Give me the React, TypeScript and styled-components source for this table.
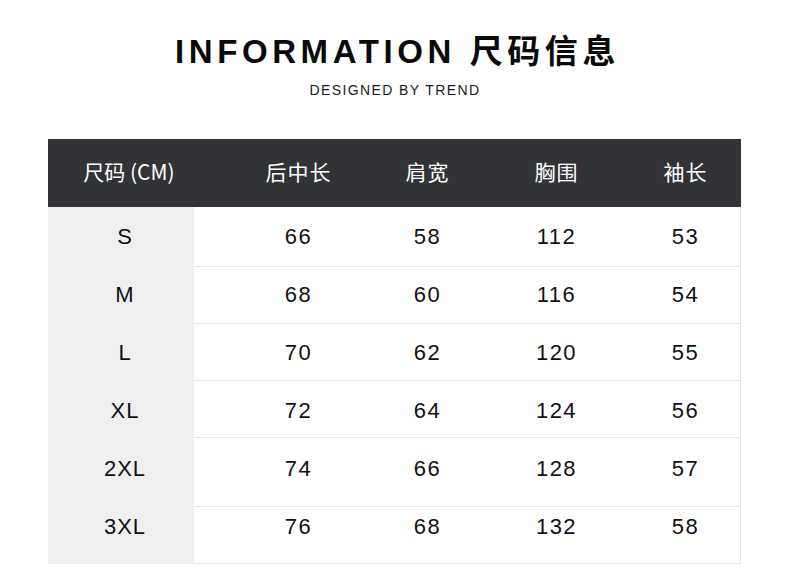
import React from "react";
import styled, { createGlobalStyle } from "styled-components";

type SizeRow = {
  size: string;
  values: number[];
  height: number;
  top: number;
};

const columns = ["后中长", "肩宽", "胸围", "袖长"];

const rows: SizeRow[] = [
  { size: "S", values: [66, 58, 112, 53], height: 60, top: 19 },
  { size: "M", values: [68, 60, 116, 54], height: 57, top: 17 },
  { size: "L", values: [70, 62, 120, 55], height: 57, top: 18 },
  { size: "XL", values: [72, 64, 124, 56], height: 57, top: 19 },
  { size: "2XL", values: [74, 66, 128, 57], height: 69, top: 20 },
  { size: "3XL", values: [76, 68, 132, 58], height: 57, top: 9 },
];

const GlobalStyle = createGlobalStyle`
  html, body {
    margin: 0;
    padding: 0;
    background: #fff;
  }
  body {
    font-family: "Liberation Sans", Arial, "Noto Sans CJK SC", sans-serif;
    color: #111;
  }
`;

export default function App() {
  return (
    <>
      <GlobalStyle />
      <Page>
        <Title>INFORMATION 尺码信息</Title>
        <Subtitle>DESIGNED BY TREND</Subtitle>
        <Table>
          <HeaderRow>
            <HeaderSizeCell>尺码 (CM)</HeaderSizeCell>
            <Values>
              {columns.map((c) => (
                <HeaderCell key={c}>{c}</HeaderCell>
              ))}
            </Values>
          </HeaderRow>
          {rows.map((r) => (
            <Row key={r.size} $h={r.height}>
              <SizeCell $top={r.top}>{r.size}</SizeCell>
              <ValueLine>
                {r.values.map((v, i) => (
                  <ValueCell key={i} $top={r.top}>
                    {v}
                  </ValueCell>
                ))}
              </ValueLine>
            </Row>
          ))}
        </Table>
      </Page>
    </>
  );
}

const Page = styled.div`
  width: 790px;
  height: 568px;
  overflow: hidden;
  display: flex;
  flex-direction: column;
  align-items: center;
  padding-top: 35px;
  box-sizing: border-box;
`;

const Title = styled.h1`
  margin: 0 0 0 5px;
  font-family: "Liberation Sans", Arial, "Noto Sans CJK SC", sans-serif;
  font-size: 33px;
  line-height: 33px;
  font-weight: 700;
  letter-spacing: 4.6px;
  color: #0a0a0a;
`;

const Subtitle = styled.div`
  margin-top: 15px;
  font-size: 14px;
  line-height: 14px;
  letter-spacing: 1.4px;
  color: #1a1a1a;
`;

const Table = styled.div`
  align-self: flex-start;
  margin: 42px 0 0 48px;
  width: 693px;
  display: flex;
  flex-direction: column;
`;

const HeaderRow = styled.div`
  display: grid;
  grid-template-columns: 146px minmax(0, 1fr);
  height: 68px;
  padding-bottom: 4px;
  box-sizing: border-box;
  background: #323337;
  color: #fff;
  align-items: center;
`;

const HeaderSizeCell = styled.div`
  padding-left: 16px;
  text-align: center;
  font-size: 21px;
  line-height: 22px;
  font-family: "Noto Sans CJK SC", sans-serif;
`;

const Values = styled.div`
  display: grid;
  grid-template-columns: repeat(4, 129px);
  padding-left: 40px;
`;

const HeaderCell = styled.div`
  text-align: center;
  font-size: 21px;
  line-height: 22px;
  letter-spacing: 1px;
  font-family: "Noto Sans CJK SC", sans-serif;
`;

const Row = styled.div<{ $h: number }>`
  display: grid;
  grid-template-columns: 146px minmax(0, 1fr);
  height: ${(p) => p.$h}px;
`;

const SizeCell = styled.div<{ $top: number }>`
  background: #efefef;
  padding: ${(p) => p.$top}px 0 0 8px;
  text-align: center;
  font-size: 22px;
  line-height: 22px;
  letter-spacing: 1px;
`;

const ValueLine = styled(Values)`
  border-bottom: 1px solid #e6e6e6;
  border-right: 1px solid #e6e6e6;
  box-sizing: border-box;
  min-width: 0;
`;

const ValueCell = styled.div<{ $top: number }>`
  padding-top: ${(p) => p.$top}px;
  text-align: center;
  font-size: 22px;
  line-height: 22px;
  letter-spacing: 1.5px;
`;
